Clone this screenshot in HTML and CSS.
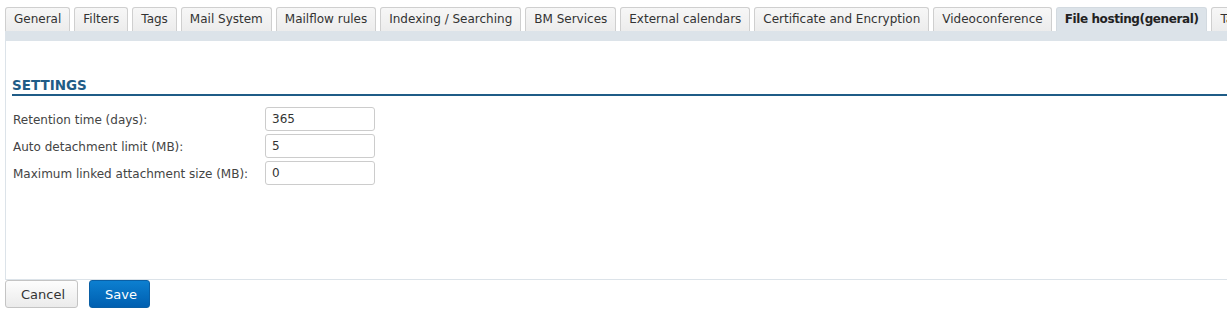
FILE: index.html
```html
<!DOCTYPE html>
<html lang="en">
<head>
	<meta charset="UTF-8">
	<title>File hosting</title>
	<link rel="stylesheet" href="styles.css">
</head>
<body>
	<div class="tabs">
		<div class="tab">General</div>
		<div class="tab">Filters</div>
		<div class="tab">Tags</div>
		<div class="tab">Mail System</div>
		<div class="tab">Mailflow rules</div>
		<div class="tab">Indexing / Searching</div>
		<div class="tab">BM Services</div>
		<div class="tab">External calendars</div>
		<div class="tab">Certificate and Encryption</div>
		<div class="tab">Videoconference</div>
		<div class="tab tab-active">File hosting(general)</div>
		<div class="tab">Tasks</div>
	</div>
	<div class="tab-strip"></div>
	<div class="panel">
		<h2 class="section-title">SETTINGS</h2>
		<div class="form">
			<label class="field-label">Retention time (days):</label>
			<input class="field-input" type="text" value="365">
			<label class="field-label">Auto detachment limit (MB):</label>
			<input class="field-input" type="text" value="5">
			<label class="field-label">Maximum linked attachment size (MB):</label>
			<input class="field-input" type="text" value="0">
		</div>
	</div>
	<div class="actions">
		<button class="btn btn-cancel">Cancel</button>
		<button class="btn btn-save">Save</button>
	</div>
</body>
</html>
```

FILE: styles.css
```css
* {
	margin: 0;
	box-sizing: border-box;
}

body {
	font-family: "DejaVu Sans", "Open Sans", sans-serif;
	font-size: 12px;
	color: #333333;
	background-color: #ffffff;
	overflow: hidden;
}

.tabs {
	display: flex;
	gap: 4px;
	padding: 7px 0 0 5px;
	white-space: nowrap;
	overflow: hidden;
}

.tab {
	flex-shrink: 0;
	height: 24px;
	line-height: 23px;
	padding: 0 8px;
	border: 1px solid #cfcfcf;
	border-bottom: 0;
	border-radius: 3px 3px 0 0;
	background: linear-gradient(#f7f7f7, #ececec);
	color: #333333;
	font-size: 12px;
}

.tab-active {
	background: #dce3e9;
	border-color: #d3dae0;
	font-weight: bold;
	letter-spacing: -0.4px;
	color: #222222;
}

.tab-strip {
	height: 10px;
	margin-left: 5px;
	background-color: #dce3e9;
}

.panel {
	height: 239px;
	margin-left: 5px;
	padding: 36px 0 0 6px;
	border-left: 1px solid #dce3e9;
	border-bottom: 1px solid #dce3e9;
}

.section-title {
	font-size: 13.5px;
	font-weight: bold;
	color: #1f5c87;
	line-height: 16px;
	padding-bottom: 1px;
	border-bottom: 2px solid #1f5c87;
}

.form {
	display: grid;
	grid-template-columns: 252px 110px;
	row-gap: 3px;
	align-items: center;
	padding: 11px 0 0 1px;
}

.field-label {
	font-size: 12px;
	color: #444444;
	padding-top: 1px;
}

.field-input {
	height: 24px;
	width: 110px;
	border: 1px solid #cccccc;
	border-radius: 3px;
	padding: 0 6px;
	font-family: inherit;
	font-size: 12px;
	color: #333333;
}

.actions {
	display: flex;
	gap: 11px;
	padding-left: 5px;
}

.btn {
	height: 28px;
	border-radius: 3px;
	font-family: inherit;
	font-size: 13px;
	padding: 0 15px;
}

.btn-cancel {
	width: 73px;
	border: 1px solid #c4c4c4;
	background: linear-gradient(#fdfdfd, #ebebeb);
	color: #333333;
}

.btn-save {
	width: 61px;
	border: 1px solid #0a5fa5;
	background: linear-gradient(#0c7fd0, #005fb0);
	color: #ffffff;
}
```
